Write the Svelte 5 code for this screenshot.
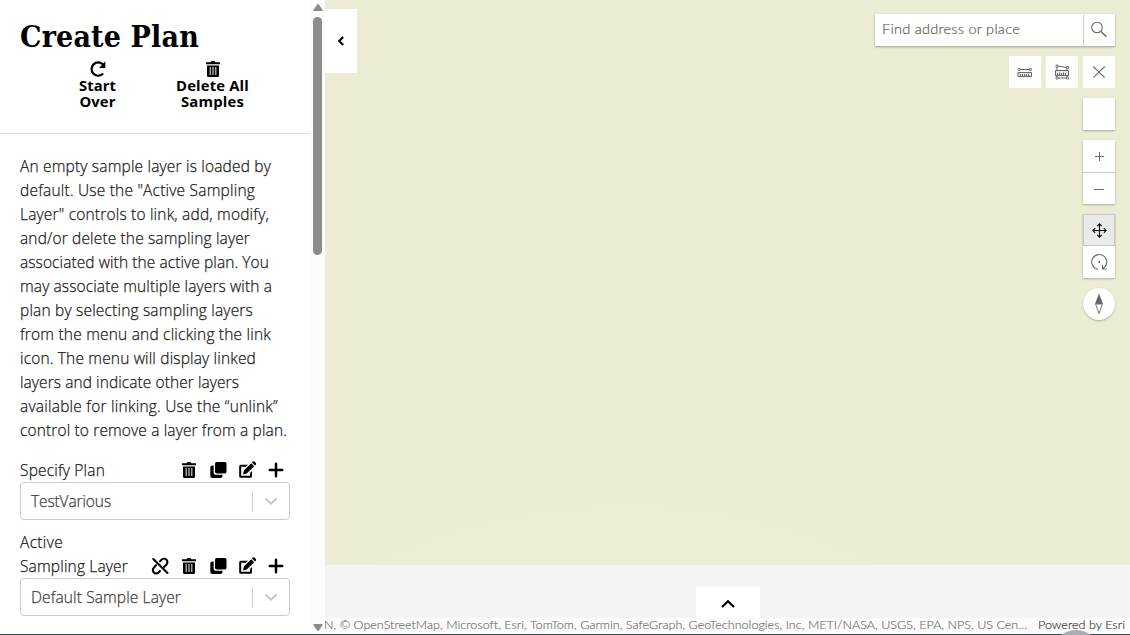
<script>
  function fit(node, width) {
    const n = node.textContent.length;
    node.style.letterSpacing = '0px';
    const natural = node.getBoundingClientRect().width;
    node.style.letterSpacing = (width - natural) / n + 'px';
  }

  const intro = [
    ['An empty sample layer is loaded by', 251],
    ['default. Use the "Active Sampling', 235],
    ['Layer" controls to link, add, modify,', 249],
    ['and/or delete the sampling layer', 230],
    ['associated with the active plan. You', 249],
    ['may associate multiple layers with a', 252],
    ['plan by selecting sampling layers', 233],
    ['from the menu and clicking the link', 251],
    ['icon. The menu will display linked', 236],
    ['layers and indicate other layers', 219],
    ['available for linking. Use the “unlink”', 258],
    ['control to remove a layer from a plan.', 267]
  ];
  const actions = ['trash', 'copy', 'edit', 'plus'];
</script>

{#snippet icon(name)}
  <svg class="icon" viewBox="0 0 18 18" width="18" height="18" aria-hidden="true">
    {#if name === 'trash'}
      <path d="M2 2.3h4.6L7.4 1h3.2l.8 1.3H16v2H2z" />
      <path d="M3 5.4h12V15.500a1.500 1.500 0 0 1-1.500 1.500h-9A1.500 1.500 0 0 1 3 15.500z" />
      <path d="M6.200 7v8M9 7v8M11.800 7v8" stroke="#ddd" stroke-width="1.100" />
    {:else if name === 'copy'}
      <rect x="6" y="1" width="11.500" height="11.500" rx="1.800" />
      <path d="M4.700 4.600H3.300A2 2 0 0 0 1.300 6.600V15a2 2 0 0 0 2 2h8.200a2 2 0 0 0 2-2v-1.200H6.700a2 2 0 0 1-2-2z" />
    {:else if name === 'edit'}
      <path d="M10 3.700H2.700a1.500 1.500 0 0 0-1.500 1.500v10a1.500 1.500 0 0 0 1.500 1.500h9.800a1.500 1.500 0 0 0 1.500-1.500V10l-2 2v2.700H3.200v-9H8z" />
      <path d="m13.200 2.200 3 3-7.400 7.400-3.900.9 1-3.900zM14 1.400l.9-.9q.8-.6 1.600 0l1.400 1.400q.7.800 0 1.600l-.9.900z" />
    {:else if name === 'plus'}
      <path d="M9 2.700v12.600M2.700 9h12.600" stroke="#000" stroke-width="2.500" stroke-linecap="round" />
    {:else if name === 'unlink'}
      <g fill="none" stroke="#000" stroke-width="2.100" stroke-linecap="round">
        <path d="M2.300 2 16.500 16" />
        <path d="m9 4.300 1.500-1.500a3.250 3.250 0 0 1 5 4.600l-2.500 2.500" />
        <path d="m5 8.200-2.200 2.500a3.250 3.250 0 0 0 4.700 4.700l1.500-1.500" />
      </g>
    {/if}
  </svg>
{/snippet}

{#snippet select(value, width)}
  <div class="select">
    <div class="value"><span use:fit={width}>{value}</span></div>
    <i></i>
    <div class="caret">
      <svg viewBox="0 0 14 9" width="14" height="9"><path d="m2 2 5 4.700L12 2" fill="none" stroke="#ccc" stroke-width="2.200" stroke-linecap="round" /></svg>
    </div>
  </div>
{/snippet}

<div class="app">
  <main>
    <aside>
      <header>
        <h1><span use:fit={179}>Create Plan</span></h1>
        <div class="heading-actions">
          <button>
            <svg class="top-icon" viewBox="0 0 18 18" width="18" height="18">
              <path d="M13.800 4.300A6.650 6.650 0 1 0 13.500 14.200" fill="none" stroke="#000" stroke-width="2.200" stroke-linecap="round" />
              <path d="M16.300 1.200V8h-6.200z" />
            </svg>
            <b use:fit={37}>Start</b><b use:fit={36}>Over</b>
          </button>
          <button>
            <span class="top-icon">{@render icon('trash')}</span>
            <b use:fit={73}>Delete All</b><b use:fit={63}>Samples</b>
          </button>
        </div>
      </header>
      <section>
        <p>
          {#each intro as [line, width]}
            <span class="line"><span use:fit={width}>{line}</span></span>
          {/each}
        </p>
        <div class="field">
          <div class="label"><span use:fit={85}>Specify Plan</span></div>
          <div class="tools">
            {#each actions as name}{@render icon(name)}{/each}
          </div>
        </div>
        {@render select('TestVarious', 80)}
        <div class="field layer">
          <div class="label"><span use:fit={43}>Active</span><br /><span use:fit={108}>Sampling Layer</span></div>
          <div class="tools">
            {@render icon('unlink')}
            {#each actions as name}{@render icon(name)}{/each}
          </div>
        </div>
        {@render select('Default Sample Layer', 150)}
      </section>
    </aside>
    <div class="scrollbar">
      <svg viewBox="0 0 10 8" width="10" height="8"><path d="M4 .8Q5-.6 6 .8L9.600 6q.3 1-.7 1H1.100q-1 0-.7-1z" /></svg>
      <div class="track"><div class="thumb"></div></div>
      <svg viewBox="0 0 10 8" width="10" height="8"><path d="M4 7.200q1 1.400 2 0L9.600 2q.3-1-.7-1H1.100q-1 0-.7 1z" /></svg>
    </div>
    <div class="map">
      <div class="terrain">
        <button class="collapse">
          <svg viewBox="0 0 8 12" width="8" height="12"><path d="M6.200 2 2.200 6l4 4" fill="none" stroke="#000" stroke-width="2.100" /></svg>
        </button>
        <div class="widgets">
          <div class="search">
            <div class="query"><span use:fit={138}>Find address or place</span></div>
            <div class="go">
              <svg viewBox="0 0 18 18" width="18" height="18" fill="none" stroke="#6a6a6a"><circle cx="7" cy="6.500" r="5.300" stroke-width="1.100" /><path d="m11 10.500 5.400 5.300" stroke-width="1.500" /></svg>
            </div>
          </div>
          <div class="measure">
            <div class="tile">
              <svg viewBox="0 0 16 16" width="16" height="16" fill="none" stroke="#6a6a6a">
                <path d="M1 8.500h13.500v4H1z" fill="#e7e7e7" /><path d="M3.500 12v-2M5.500 12v-2M7.500 12v-2M9.500 12v-2M11.500 12v-2M3 5.500h10" />
                <path d="M1 4.500h2v2H1zM12.500 4.500h2v2h-2z" stroke-width=".8" />
              </svg>
            </div>
            <div class="tile">
              <svg viewBox="0 0 16 16" width="16" height="16" fill="none" stroke="#626262">
                <path d="m3 2 10 1.500V14H3z" /><path d="M1.500 6.500h13v5h-13z" fill="#e7e7e7" /><path d="M3.500 11V9M5.500 11V8.500M7.500 11V9M9.500 11V8.500M11.500 11V9" />
                <path d="M2 1h2v2H2zM12.500 2.500h2v2h-2zM2 13h2v2H2zM12.500 13h2v2h-2z" fill="#fff" stroke-width=".8" />
              </svg>
            </div>
            <div class="tile">
              <svg viewBox="0 0 14 14" width="14" height="14"><path d="m1.300 1.500 11.400 11.200M12.700 1.500 1.300 12.700" stroke="#6e6e6e" stroke-width="1.150" /></svg>
            </div>
          </div>
          <div class="tile raised"></div>
          <div class="stack raised">
            <div class="tile"><svg viewBox="0 0 12 12" width="12" height="12"><path d="M6.500 2v9M2 6.500h9" stroke="#6a6a6a" /></svg></div>
            <div class="tile divided"><svg viewBox="0 0 12 12" width="12" height="12"><path d="M1 6.500h10" stroke="#6a6a6a" /></svg></div>
          </div>
          <div class="stack raised">
            <div class="tile active">
              <svg viewBox="0 0 16 16" width="16" height="16" fill="none" stroke="#111" stroke-width="1.150"><path d="M8.500 2v13M2 8.500h13M6.200 4.200l2.300-2.300 2.300 2.300M6.200 12.800l2.300 2.300 2.300-2.300M4.200 6.200 1.900 8.500l2.300 2.300M12.800 6.200l2.300 2.300-2.300 2.300" /></svg>
            </div>
            <div class="tile">
              <svg viewBox="0 0 18 18" width="18" height="18" fill="none" stroke="#6a6a6a"><path d="M8 16.400A7.500 7.500 0 1 1 12.600 15.700M12.500 11.800v4.200h4" stroke-width="1.100" /><circle cx="9.300" cy="9" r=".9" fill="#555" stroke="none" /></svg>
            </div>
          </div>
          <div class="tile compass raised">
            <svg viewBox="0 0 10 22" width="10" height="22"><path d="M5 .3 9 11H1z" fill="#666" /><path d="M5 20.500 1.600 11h6.800z" fill="#fff" stroke="#777" /></svg>
          </div>
        </div>
      </div>
      <div class="base">
        <button class="expand">
          <svg viewBox="0 0 16 10" width="16" height="10"><path d="m2 8 6-5.800L14 8" fill="none" stroke="#000" stroke-width="2.200" /></svg>
        </button>
      </div>
      <div class="credits">
        <span class="sources"><span use:fit={703}>N, © OpenStreetMap, Microsoft, Esri, TomTom, Garmin, SafeGraph, GeoTechnologies, Inc, METI/NASA, USGS, EPA, NPS, US Cen…</span></span>
        <span class="powered"><span use:fit={87}>Powered by Esri</span></span>
      </div>
    </div>
  </main>
  <div class="bottom-line"></div>
  <div class="bubble"></div>
</div>

<style>
  :global(body) { margin: 0; overflow: hidden; }
  * { box-sizing: border-box; }
  .app {
    position: relative; display: flex; flex-direction: column;
    width: 1130px; height: 635px; overflow: hidden; background: #fff; color: #1b1b1b;
    font: 300 15.500px/24px "Open Sans", "Noto Sans", sans-serif;
  }
  main { flex: 1; display: flex; min-height: 0; }
  span, b { white-space: nowrap; }
  svg { display: block; flex: none; }
  button { display: flex; border: 0; padding: 0; margin: 0; background: none; color: #000; font: inherit; }

  aside { width: 310px; overflow: hidden; }
  header { height: 134px; padding-top: 18px; border-bottom: 1px solid #d8dfdd; }
  h1 { margin: 0; padding-left: 20px; height: 42px; font: bold 30px/38px "DejaVu Serif Condensed", "DejaVu Serif", serif; font-stretch: condensed; color: #000; }
  .heading-actions { display: grid; grid-template-columns: 115px 115px; padding-left: 40px; }
  .heading-actions button { flex-direction: column; align-items: center; line-height: 16px; }
  .heading-actions b { font-size: 14.800px; font-weight: 700; }
  .top-icon { height: 18px; margin-bottom: -1px; }
  section { padding: 20px 20px 0; -webkit-text-stroke: .25px currentColor; }
  p { margin: 0 0 16px; }
  .line { display: block; height: 24px; }
  .field { display: flex; justify-content: space-between; align-items: flex-end; height: 24px; }
  .layer { height: 48px; margin-top: 10px; }
  .tools { display: flex; gap: 11px; padding: 0 5.500px 3px 0; }
  .select { display: flex; align-items: center; height: 38px; border: 1px solid #ccc; border-radius: 4px; color: #404040; }
  .value { flex: 1; padding-left: 10px; }
  .select i { width: 1px; height: 20px; background: #ccc; }
  .caret { width: 36px; display: flex; justify-content: center; }

  .scrollbar { width: 15px; padding: 4px 0 3px; display: flex; flex-direction: column; align-items: center; background: #fcfcfc; fill: #8b8b8b; }
  .track { flex: 1; padding-top: 5px; }
  .thumb { width: 9px; height: 238px; border-radius: 5px; background: #8b8b8b; }

  .map { flex: 1; min-width: 0; display: flex; flex-direction: column; background: #f4f4f4; }
  .terrain {
    height: 565px; display: flex; justify-content: space-between; align-items: flex-start;
    background: radial-gradient(circle at 300px 1063px, #eeedd6 0 558px, #edecd5 559px 880px, #ecebd4 881px);
  }
  .collapse { width: 32px; height: 64px; margin-top: 9px; background: #fff; align-items: center; justify-content: center; }
  .widgets { display: flex; flex-direction: column; align-items: flex-end; gap: 10px; padding: 14px 15px 0 0; }
  .search { display: flex; width: 240px; height: 32px; background: #fff; box-shadow: 0 1px 2px #0005; }
  .query { flex: 1; padding-left: 7px; color: #5c5c5c; font: 300 14.500px/30px Lato, sans-serif; -webkit-text-stroke: .2px currentColor; }
  .go { width: 32px; padding-right: 1px; border-left: 1px solid #ccc; border-radius: 3px 0 0 3px; display: flex; align-items: center; justify-content: center; }
  .measure { display: flex; gap: 5px; }
  .tile { width: 32px; height: 32px; display: flex; align-items: center; justify-content: center; background: #fff; }
  .raised { box-shadow: 0 1px 2px #0004; }
  .divided { border-top: 1px solid #ccc; }
  .tile.active { background: #eaeaea; border: 1px solid #c8c8c8; }
  .compass { border-radius: 50%; }

  .base { height: 53px; display: flex; align-items: flex-end; justify-content: center; }
  .expand { width: 64px; height: 32px; background: #fff; align-items: center; justify-content: center; padding-top: 4px; }
  .credits { height: 16px; display: flex; justify-content: space-between; background: #fcfcfc; font: 300 12.500px/14px Lato, sans-serif; color: #6c6c6c; -webkit-text-stroke: .15px currentColor; }
  .sources { width: 702px; margin-left: -1px; }
  .powered { width: 92px; color: #333; }
  .bottom-line { height: 1px; background: #3d4551; }
  .bubble { position: absolute; left: 1052px; top: 630px; width: 48px; height: 48px; border-radius: 50%; background: #a9aeb1; }
</style>
